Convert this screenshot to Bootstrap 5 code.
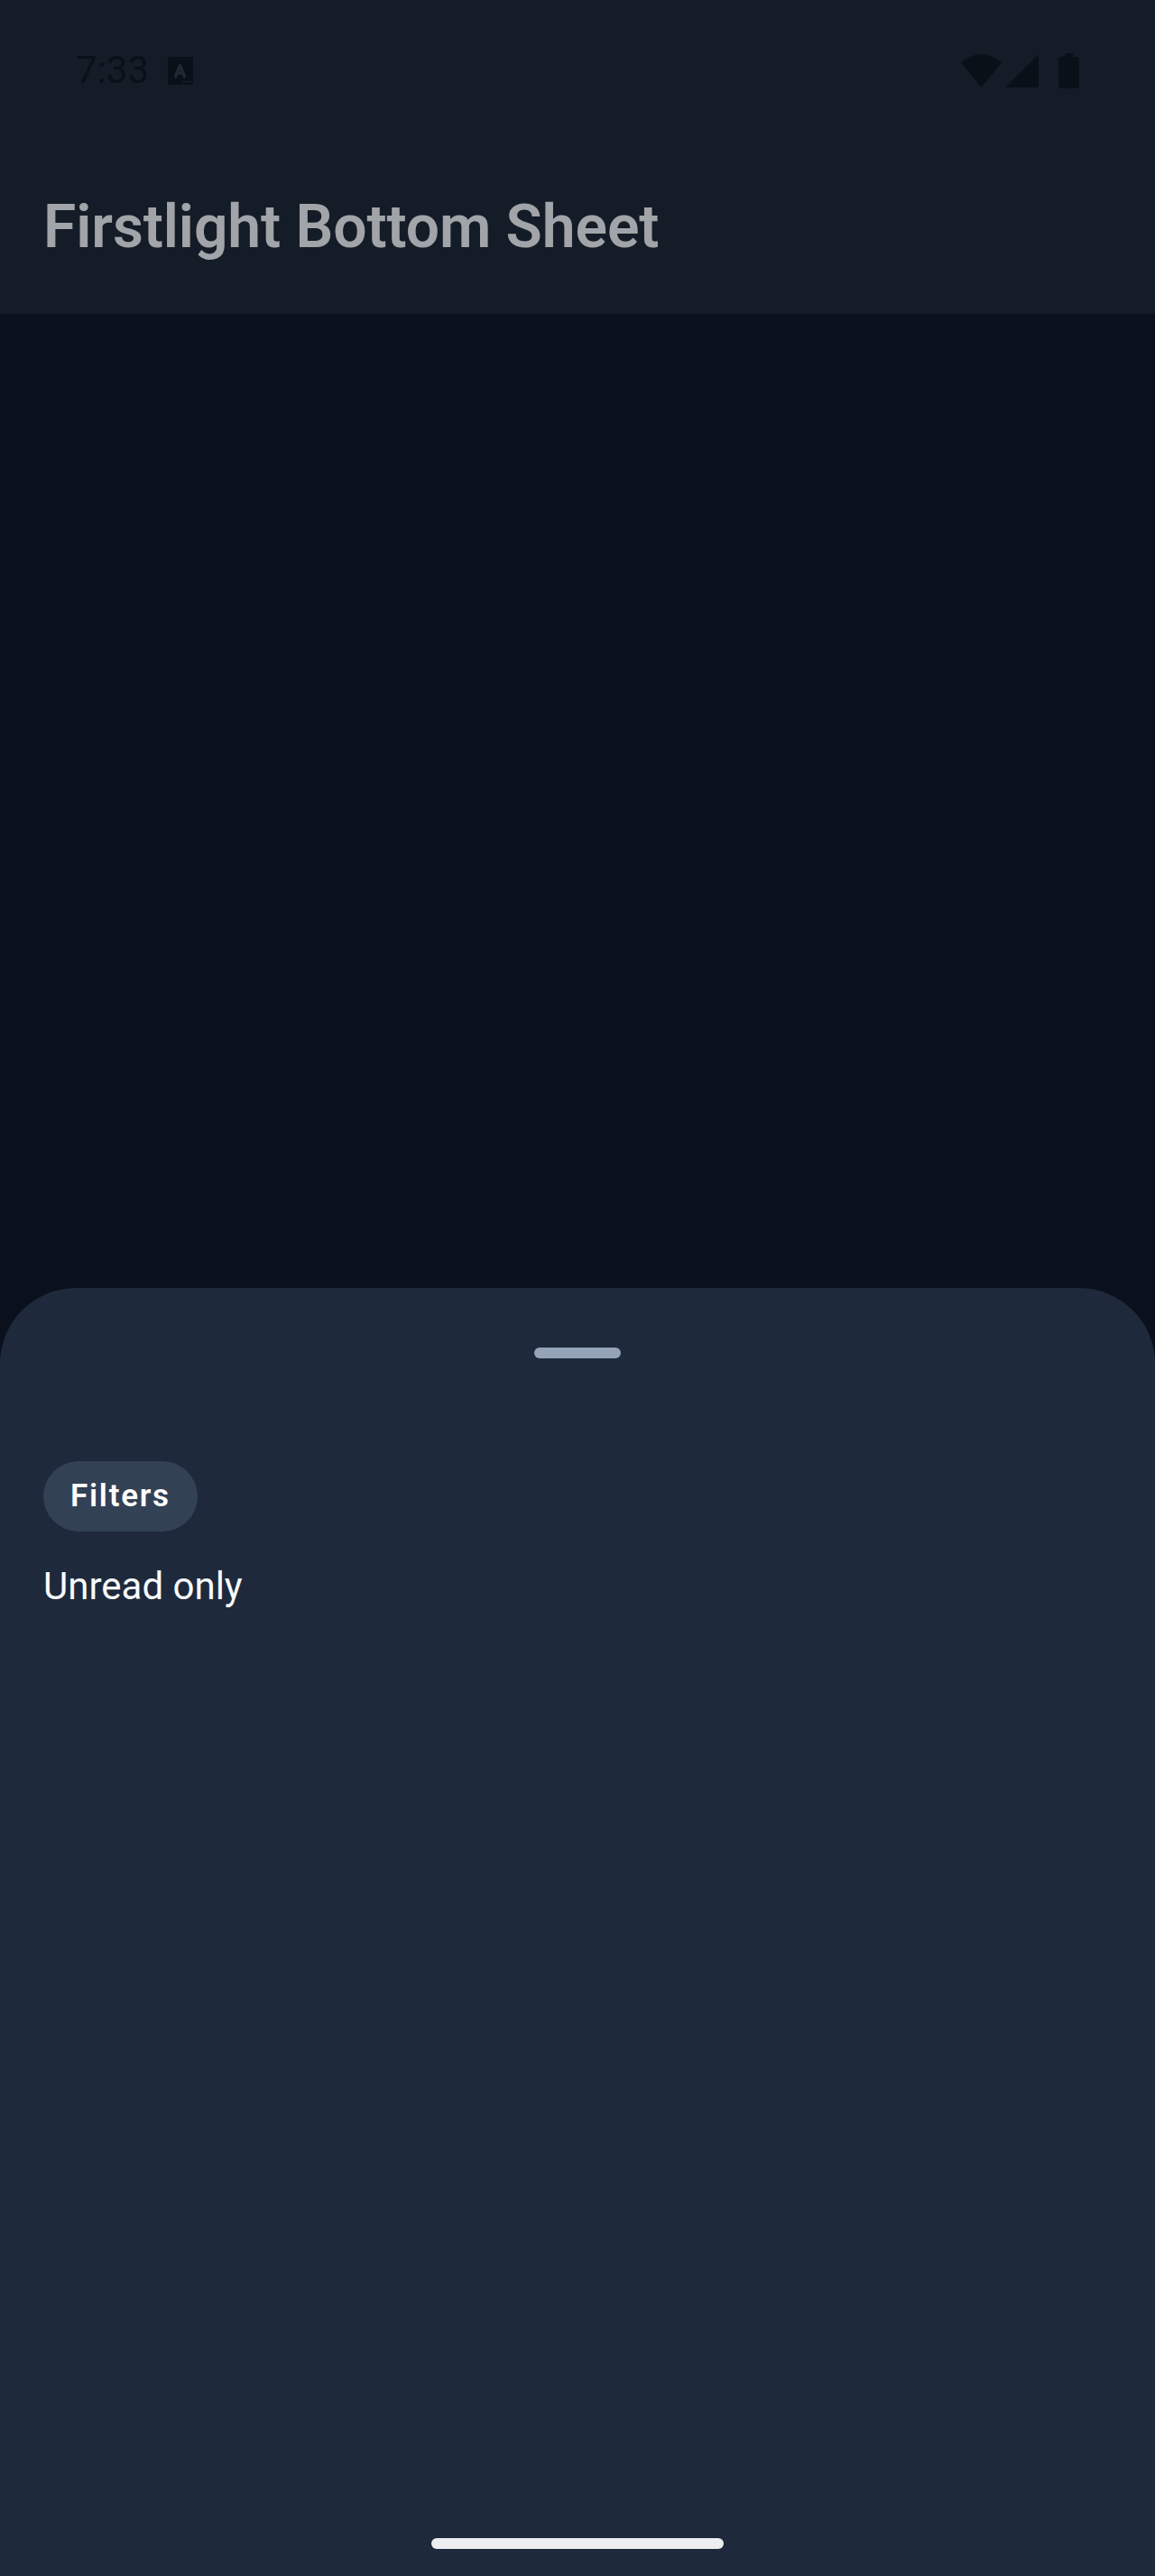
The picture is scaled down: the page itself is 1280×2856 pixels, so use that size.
<!DOCTYPE html>
<html lang="en">
<head>
  <meta charset="UTF-8">
  <meta name="viewport" content="width=device-width, initial-scale=1.0">
  <title>Firstlight Bottom Sheet</title>
  <link href="https://cdn.jsdelivr.net/npm/bootstrap@5.3.3/dist/css/bootstrap.min.css" rel="stylesheet">
  <style>
    body {
      background: #0a111c;
      font-family: Roboto, sans-serif;
    }
    .screen {
      height: 2856px;
    }
    .app-top {
      height: 348px;
      background: #141c28;
    }
    .status-row {
      height: 84px;
      margin-top: 36px;
      padding: 0 84px 0 84px;
      color: #0a1018;
    }
    .status-time {
      font-size: 42px;
      line-height: 48px;
      margin-right: 21px;
    }
    .status-icons {
      gap: 4px;
    }
    .app-title {
      font-size: 66px;
      font-weight: 600;
      line-height: 78px;
      letter-spacing: -0.1px;
      color: #a1a4a8;
      margin: 0;
      padding: 93px 48px 0;
    }
    .sheet {
      height: 1428px;
      background: #1e293b;
      border-radius: 84px 84px 0 0;
      padding: 66px 48px 30px;
    }
    .sheet-handle {
      width: 96px;
      height: 12px;
      border-radius: 6px;
      background: #94a3b8;
    }
    .filter-pill {
      height: 78px;
      margin-top: 114px;
      padding: 0 30px;
      border-radius: 39px;
      background: #334155;
      color: #fff;
      font-size: 35px;
      font-weight: 600;
      letter-spacing: 1.75px;
    }
    .filter-label {
      font-size: 42px;
      line-height: 56px;
      color: #f8fafc;
      margin-top: 33px;
    }
    .battery-icon {
      margin-left: 18px;
    }
    .nav-handle {
      width: 324px;
      height: 12px;
      border-radius: 6px;
      background: #eceef0;
    }
  </style>
</head>
<body>
<div class="screen d-flex flex-column">
  <header class="app-top flex-shrink-0">
    <div class="status-row d-flex align-items-center">
      <span class="status-time">7:33</span>
      <svg width="28" height="31" viewBox="0 0 28 31">
        <rect width="28" height="31" rx="2" fill="#0a1018"/>
        <path d="M8.5 22 L13.5 9.5 L18.5 22 M10.5 18 H16.5" fill="none" stroke="#1f2833" stroke-width="3.4" stroke-linecap="round" stroke-linejoin="round"/>
        <circle cx="18" cy="27.5" r="1" fill="#1f2833"/>
        <circle cx="21.5" cy="27.5" r="1" fill="#1f2833"/>
        <circle cx="25" cy="27.5" r="1" fill="#1f2833"/>
      </svg>
      <div class="status-icons d-flex align-items-center ms-auto">
        <svg width="45" height="37" viewBox="0 0 45 37">
          <path d="M0 9.5 A32 32 0 0 1 45 9.5 L22.5 37 Z" fill="#0a1018"/>
        </svg>
        <svg width="37" height="37" viewBox="0 0 37 37">
          <path d="M37 0 V37 H0 Z" fill="#0a1018"/>
        </svg>
        <svg class="battery-icon" width="23" height="39" viewBox="0 0 23 39">
          <path d="M7 0 H16 V4 H20 Q23 4 23 7 V36 Q23 39 20 39 H3 Q0 39 0 36 V7 Q0 4 3 4 H7 Z" fill="#0a1018"/>
        </svg>
      </div>
    </div>
    <h1 class="app-title">Firstlight Bottom Sheet</h1>
  </header>

  <main class="flex-grow-1"></main>

  <section class="sheet d-flex flex-column flex-shrink-0">
    <div class="sheet-handle align-self-center"></div>
    <div class="filter-pill d-inline-flex align-items-center align-self-start">Filters</div>
    <div class="filter-label">Unread only</div>
    <div class="nav-handle align-self-center mt-auto"></div>
  </section>
</div>
<script src="https://cdn.jsdelivr.net/npm/bootstrap@5.3.3/dist/js/bootstrap.bundle.min.js"></script>
</body>
</html>
